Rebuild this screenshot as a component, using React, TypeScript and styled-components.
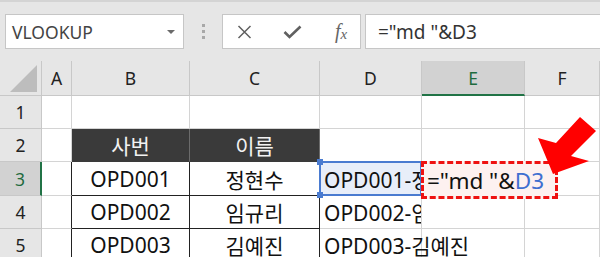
import React from 'react'
import styled, { createGlobalStyle } from 'styled-components'

const GlobalStyle = createGlobalStyle`
  html, body {
    margin: 0;
    padding: 0;
    background: #ffffff;
    overflow: hidden;
  }
  body {
    font-family: "Noto Sans", "Noto Sans CJK KR", sans-serif;
  }
`;

const Screen = styled.div`
  position: relative;
  width: 600px;
  height: 257px;
  overflow: hidden;
  background: #fff;
`;

const Toolbar = styled.div`
  display: flex;
  align-items: center;
  height: 61px;
  padding: 0 0 0 5px;
  box-sizing: border-box;
  background: #e6e6e6;
  border-top: 2px solid #d4d4d4;
`;

const NameBox = styled.div`
  display: flex;
  align-items: center;
  justify-content: space-between;
  width: 179px;
  height: 35px;
  box-sizing: border-box;
  padding: 0 8px 0 6px;
  background: #fff;
  border: 1px solid #c6c6c6;
  font-size: 17.5px;
  color: #444;
`;

const Caret = styled.span`
  width: 0;
  height: 0;
  border-left: 4px solid transparent;
  border-right: 4px solid transparent;
  border-top: 4px solid #6a6a6a;
`;

const Grip = styled.div`
  display: flex;
  flex-direction: column;
  gap: 3px;
  margin: 0 17px 0 18px;
  span {
    width: 3px;
    height: 3px;
    background: #a8a8a8;
  }
`;

const ButtonBox = styled.div`
  display: flex;
  align-items: center;
  width: 139px;
  height: 35px;
  box-sizing: border-box;
  padding-left: 14px;
  background: #fff;
  border: 1px solid #c6c6c6;
`;

const ToolIcon = styled.span<{ $gap: number }>`
  display: flex;
  margin-right: ${p => p.$gap}px;
`;

const Fx = styled.span`
  font-family: "Liberation Serif", serif;
  font-style: italic;
  font-size: 20px;
  color: #666;
  sub {
    font-size: 15px;
    vertical-align: -1px;
  }
`;

const FormulaInput = styled.div`
  flex: 1;
  display: flex;
  align-items: center;
  height: 35px;
  margin-left: 4px;
  padding-left: 12px;
  box-sizing: border-box;
  background: #fff;
  border: 1px solid #c6c6c6;
  border-right: none;
  font-size: 19px;
  color: #333;
  white-space: pre;
`;

const Sheet = styled.div`
  display: grid;
  grid-template-columns: 42px 30px 118px 130px 102px 103px 75px;
  grid-template-rows: 35px 33px 33px 34px 33px 33px;
`;

const ColHead = styled.div<{ $active?: boolean }>`
  display: flex;
  align-items: center;
  justify-content: center;
  box-sizing: border-box;
  background: ${p => (p.$active ? '#d2d2d2' : '#e6e6e6')};
  border-right: 1px solid #c8c8c8;
  border-bottom: ${p => (p.$active ? '2px solid #217346' : '1px solid #c8c8c8')};
  font-size: 17.5px;
  color: ${p => (p.$active ? '#1e6b3e' : '#222')};
`;

const Corner = styled.div`
  box-sizing: border-box;
  background: #e6e6e6;
  border-right: 1px solid #c8c8c8;
  border-bottom: 1px solid #c8c8c8;
  svg {
    display: block;
  }
`;

const RowHead = styled.div<{ $active?: boolean }>`
  display: flex;
  align-items: center;
  justify-content: center;
  box-sizing: border-box;
  background: ${p => (p.$active ? '#d2d2d2' : '#e6e6e6')};
  border-right: ${p => (p.$active ? '2px solid #217346' : '1px solid #c8c8c8')};
  border-bottom: 1px solid #c8c8c8;
  font-size: 17.5px;
  color: ${p => (p.$active ? '#1e6b3e' : '#222')};
`;

const Cell = styled.div<{
  $dark?: boolean
  $left?: boolean
  $clip?: boolean
  $boxed?: boolean
  $selected?: boolean
}>`
  display: flex;
  align-items: center;
  justify-content: ${p => (p.$left ? 'flex-start' : 'center')};
  box-sizing: border-box;
  padding-left: ${p => (p.$left ? '4px' : '0')};
  white-space: nowrap;
  overflow: ${p => (p.$clip ? 'hidden' : 'visible')};
  background: ${p => (p.$dark ? '#3a3a3a' : p.$selected ? '#e8eef9' : 'transparent')};
  color: ${p => (p.$dark ? '#f2f2f2' : '#111')};
  border-right: 1px solid ${p => (p.$boxed ? '#222' : p.$dark ? '#6b6b6b' : '#d4d4d4')};
  border-bottom: 1px solid ${p => (p.$boxed ? '#222' : p.$dark ? '#3a3a3a' : '#d4d4d4')};
  font-size: 21px;
  position: relative;
  z-index: ${p => (p.$left ? 2 : 1)};
`;

const Selection = styled.div`
  position: absolute;
  left: 319px;
  top: 161px;
  width: 103px;
  height: 35px;
  box-sizing: border-box;
  border: 2px solid #4a7bd0;
  z-index: 3;
  span {
    position: absolute;
    width: 6px;
    height: 6px;
    background: #4a7bd0;
  }
`;

const EditBox = styled.div`
  position: absolute;
  left: 421px;
  top: 161px;
  width: 137px;
  height: 38px;
  box-sizing: border-box;
  border: 3px dashed #ee1111;
  background: #fdf1f0;
  z-index: 4;
  display: flex;
  align-items: center;
  padding-left: 3px;
  font-size: 22.5px;
  color: #111;
  white-space: pre;
`;

const Ref = styled.span`
  color: #3f6fd0;
`;

const Arrow = styled.svg`
  position: absolute;
  left: 0;
  top: 0;
  z-index: 5;
  pointer-events: none;
`;

const cols = ['A', 'B', 'C', 'D', 'E', 'F']

const rows: { b?: string; c?: string; d?: string; dark?: boolean; clip?: boolean }[] = [
  {},
  { b: '사번', c: '이름', dark: true },
  { b: 'OPD001', c: '정현수', d: 'OPD001-정현수', clip: true },
  { b: 'OPD002', c: '임규리', d: 'OPD002-임규리', clip: true },
  { b: 'OPD003', c: '김예진', d: 'OPD003-김예진' },
]

const App = () => {
  return (
    <Screen>
      <GlobalStyle />
      <Toolbar>
        <NameBox>
          VLOOKUP
          <Caret />
        </NameBox>
        <Grip>
          <span />
          <span />
          <span />
        </Grip>
        <ButtonBox>
          <ToolIcon $gap={31}>
            <svg width="15" height="14" viewBox="0 0 15 14">
              <path d="M1.5 1 L13.5 13 M13.5 1 L1.5 13" stroke="#606060" strokeWidth="1.5" fill="none" />
            </svg>
          </ToolIcon>
          <ToolIcon $gap={33}>
            <svg width="19" height="14" viewBox="0 0 19 14">
              <path d="M1.5 7 L6.5 12 L17.5 1.5" stroke="#606060" strokeWidth="2.6" fill="none" />
            </svg>
          </ToolIcon>
          <Fx>
            f<sub>x</sub>
          </Fx>
        </ButtonBox>
        <FormulaInput>{'="md "&D3'}</FormulaInput>
      </Toolbar>

      <Sheet>
        <Corner>
          <svg width="42" height="35">
            <polygon points="10,31 37,4 37,31" fill="#bdbdbd" />
          </svg>
        </Corner>
        {cols.map(c => (
          <ColHead key={c} $active={c === 'E'}>
            {c}
          </ColHead>
        ))}

        {rows.map((r, i) => {
          const n = i + 1
          const boxed = n >= 3
          return (
            <React.Fragment key={n}>
              <RowHead $active={n === 3}>{n}</RowHead>
              <Cell style={boxed ? { borderRight: '1px solid #222' } : undefined} />
              <Cell $dark={r.dark} $boxed={boxed}>
                {r.b}
              </Cell>
              <Cell $dark={r.dark} $boxed={boxed}>
                {r.c}
              </Cell>
              <Cell $left $clip={r.clip} $selected={n === 3}>
                {r.d}
              </Cell>
              <Cell />
              <Cell />
            </React.Fragment>
          )
        })}
      </Sheet>

      <Selection>
        <span style={{ left: -4, top: -4 }} />
        <span style={{ left: -4, bottom: -4 }} />
      </Selection>

      <EditBox>
        {'="md "&'}
        <Ref>D3</Ref>
      </EditBox>

      <Arrow width="600" height="257">
        <polygon
          points="553,174 538,138 556,143 580,117 596,131 571,156 589,161"
          fill="#ff0000"
        />
      </Arrow>
    </Screen>
  )
}

export default App
